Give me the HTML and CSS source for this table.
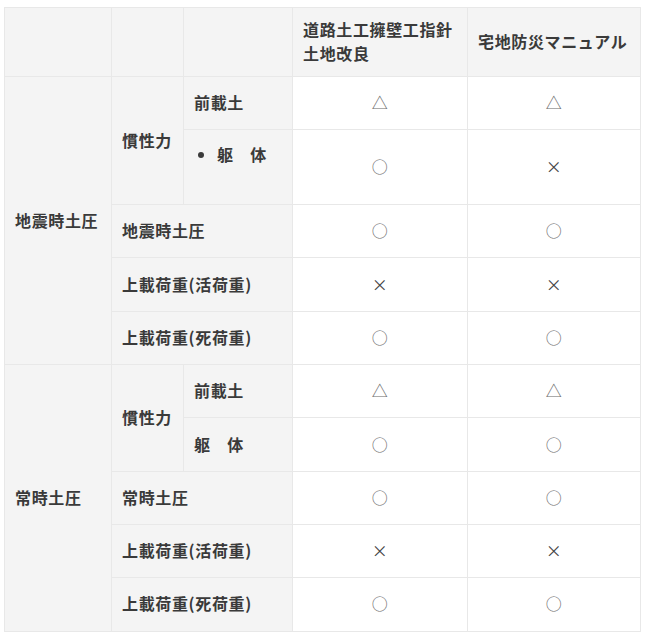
FILE: index.html
```html
<!DOCTYPE html>
<html lang="ja">
<head>
<meta charset="utf-8">
<title>土圧比較表</title>
<link rel="stylesheet" href="styles.css">
</head>
<body>
<table class="cmp">
  <colgroup>
    <col class="c1"><col class="c2"><col class="c3"><col class="c4"><col class="c5">
  </colgroup>
  <thead>
    <tr>
      <th></th><th></th><th></th>
      <th>道路土工擁壁工指針<br>土地改良</th>
      <th>宅地防災マニュアル</th>
    </tr>
  </thead>
  <tbody>
    <tr>
      <th rowspan="5">地震時土圧</th>
      <th rowspan="2">慣性力</th>
      <th>前載土</th>
      <td>△</td><td>△</td>
    </tr>
    <tr>
      <th class="top"><ul class="blist"><li>躯　体</li></ul></th>
      <td>○</td><td class="x">×</td>
    </tr>
    <tr>
      <th colspan="2">地震時土圧</th>
      <td>○</td><td>○</td>
    </tr>
    <tr>
      <th colspan="2">上載荷重(活荷重)</th>
      <td class="x">×</td><td class="x">×</td>
    </tr>
    <tr>
      <th colspan="2">上載荷重(死荷重)</th>
      <td>○</td><td>○</td>
    </tr>
    <tr>
      <th rowspan="5">常時土圧</th>
      <th rowspan="2">慣性力</th>
      <th>前載土</th>
      <td>△</td><td>△</td>
    </tr>
    <tr>
      <th>躯　体</th>
      <td>○</td><td>○</td>
    </tr>
    <tr>
      <th colspan="2">常時土圧</th>
      <td>○</td><td>○</td>
    </tr>
    <tr>
      <th colspan="2">上載荷重(活荷重)</th>
      <td class="x">×</td><td class="x">×</td>
    </tr>
    <tr>
      <th colspan="2">上載荷重(死荷重)</th>
      <td>○</td><td>○</td>
    </tr>
  </tbody>
</table>
</body>
</html>
```
FILE: styles.css
```css
html, body {
  margin: 0;
  background: #ffffff;
}
body {
  padding: 7px 0 0 4px;
  font-family: "Noto Sans CJK JP", "Noto Sans", sans-serif;
  color: #3a3a3a;
}
.cmp {
  border-collapse: collapse;
  table-layout: fixed;
  width: 636px;
  font-size: 16px;
  letter-spacing: 0.04em;
}
.cmp .c1 { width: 107px; }
.cmp .c2 { width: 72px; }
.cmp .c3 { width: 109px; }
.cmp .c4 { width: 175px; }
.cmp .c5 { width: 173px; }

.cmp th,
.cmp td {
  border: 1px solid #e8e8e8;
  line-height: 24px;
  padding: 13.17px 10px 15.17px;
  vertical-align: middle;
}
.cmp thead th {
  padding: 9px 10px 11px;
  background: #f4f4f4;
  text-align: left;
  font-weight: bold;
}
.cmp tbody th {
  background: #f4f4f4;
  text-align: left;
  font-weight: bold;
}
.cmp tbody th.top {
  vertical-align: top;
}
.cmp td {
  text-align: center;
  color: #6a6a6a;
  font-weight: normal;
}
.cmp td.x {
  color: #444444;
}
.cmp .blist {
  margin: -1px 0 22.5px 0;
  padding: 0 0 0 23px;
  list-style: disc;
}
.cmp .blist li {
  margin: 0;
}
```
